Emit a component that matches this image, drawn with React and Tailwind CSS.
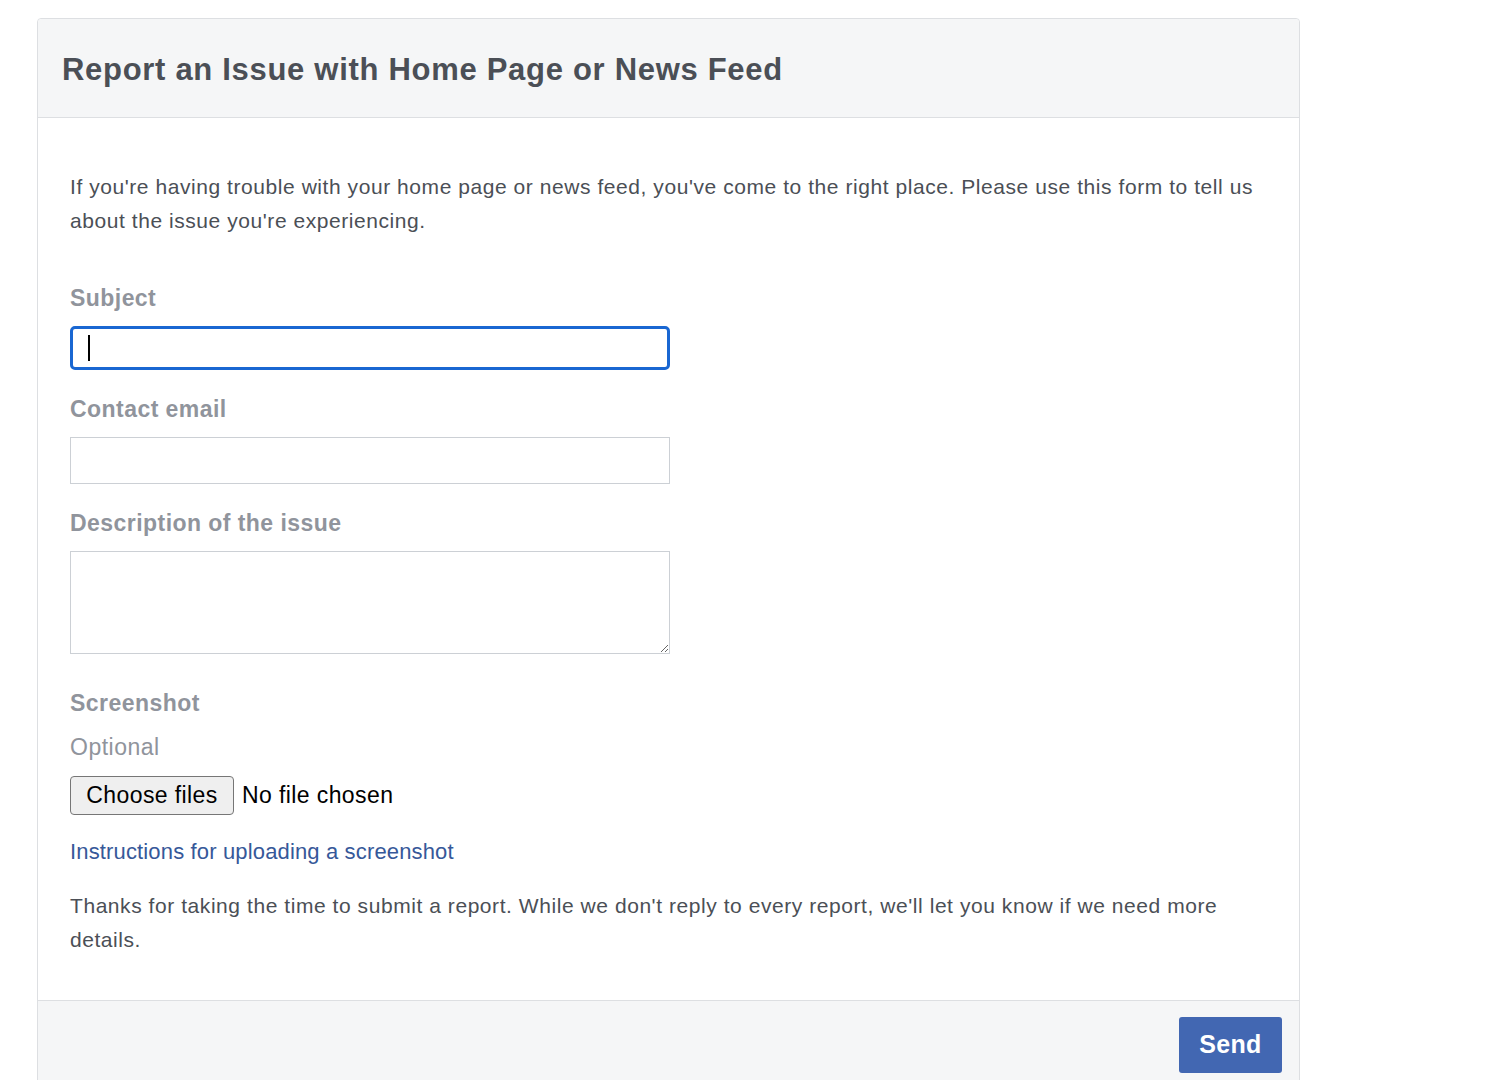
import React from "react";

const Label = ({ children, className = "" }) => (
  <div className={`text-[23px] font-bold tracking-[0.45px] text-[#90949c] leading-[28px] ${className}`}>{children}</div>
);

export default function App() {
  return (
    <div className="min-h-[1080px] bg-white pl-[37px] pt-[18px] font-['Liberation_Sans',Arial,sans-serif]">
      <div className="w-[1263px] rounded-t-[4px] border border-[#dddfe2] bg-white">
        <div className="flex h-[99px] items-center border-b border-[#dddfe2] bg-[#f5f6f7] px-[24px] pt-[2px] rounded-t-[4px]">
          <h2 className="text-[31px] font-bold tracking-[0.7px] text-[#4b4f56] leading-none">
            Report an Issue with Home Page or News Feed
          </h2>
        </div>

        <div className="px-[32px] pt-[52px] pb-[43px] text-[#4b4f56]">
          <p className="text-[21px] leading-[34px] tracking-[0.56px]">
            If you're having trouble with your home page or news feed, you've come to the right place. Please use this form to tell us about the issue you're experiencing.
          </p>

          <Label className="mt-[46px]">Subject</Label>
          <div className="mt-[14px] flex h-[44px] w-[600px] items-center rounded-[5px] border-[3px] border-[#1967d2] bg-white px-[15px]">
            <span className="h-[26px] w-[2px] bg-black" />
          </div>

          <Label className="mt-[25px]">Contact email</Label>
          <input
            type="text"
            className="mt-[14px] block h-[47px] w-[600px] border border-[#ccd0d5] bg-white outline-none"
          />

          <Label className="mt-[25px]">Description of the issue</Label>
          <textarea className="mt-[14px] block h-[103px] w-[600px] border border-[#ccd0d5] bg-white outline-none" />

          <Label className="mt-[35px]">Screenshot</Label>
          <div className="mt-[17px] text-[23px] leading-[26px] tracking-[0.5px] text-[#90949c]">Optional</div>
          <div className="mt-[16px] flex items-center gap-[8px] text-[23px] tracking-[0.4px] text-black">
            <button className="h-[39px] w-[164px] rounded-[4px] border border-[#767676] bg-[#efefef] leading-none">
              Choose files
            </button>
            <span>No file chosen</span>
          </div>

          <a href="#" className="mt-[23px] block text-[22px] leading-[28px] tracking-[0.15px] text-[#365899]">
            Instructions for uploading a screenshot
          </a>

          <p className="mt-[23px] text-[21px] leading-[34px] tracking-[0.56px]">
            Thanks for taking the time to submit a report. While we don't reply to every report, we'll let you know if we need more details.
          </p>
        </div>

        <div className="flex h-[100px] items-start justify-end border-t border-[#dddfe2] bg-[#f5f6f7] px-[17px] pt-[16px]">
          <button className="h-[56px] w-[103px] rounded-[3px] bg-[#4267b2] text-[25px] font-bold tracking-[0.3px] text-white">
            Send
          </button>
        </div>
      </div>
    </div>
  );
}
